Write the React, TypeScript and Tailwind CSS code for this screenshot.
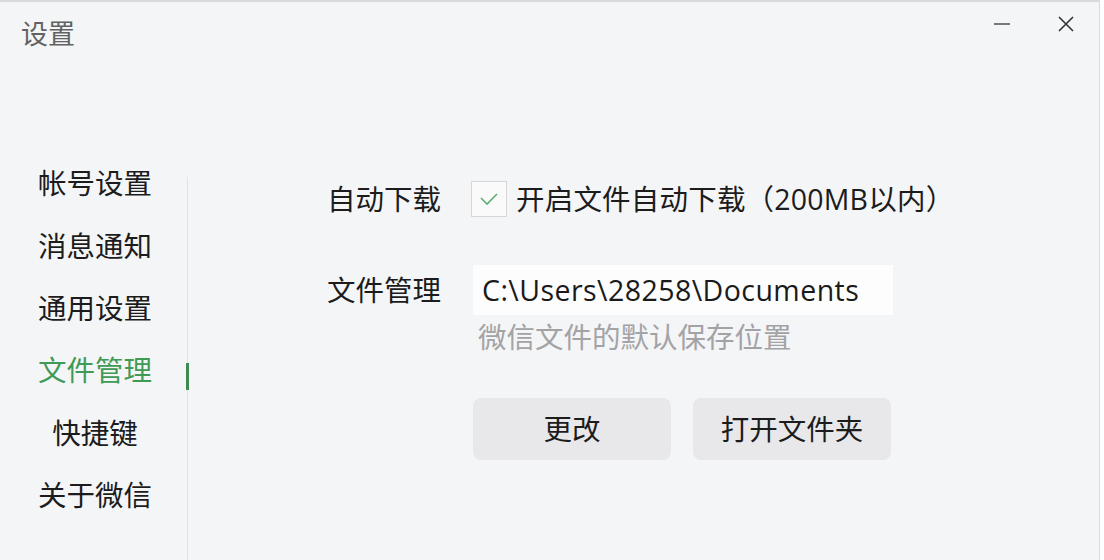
import React from "react";

const FONT = { fontFamily: '"Open Sans", "Noto Sans CJK SC", sans-serif' };

const items = ["帐号设置", "消息通知", "通用设置", "文件管理", "快捷键", "关于微信"];

export default function App() {
  return (
    <div className="w-[1104px] h-[560px] bg-white flex overflow-hidden" style={FONT}>
      <div className="w-[1100px] h-full bg-[#f4f5f7] border-t-2 border-r border-[#d9dadd] flex flex-col">
        {/* title bar */}
        <div className="h-[150px] flex items-start justify-between">
          <div className="pl-[21px] pt-[14px] text-[27px] leading-[36px] text-[#626262]">设置</div>
          <div className="flex items-center pt-[12px] pr-[24px] gap-[46px]">
            <svg width="18" height="18" viewBox="0 0 18 18" className="mt-[1px]">
              <line x1="1" y1="9" x2="17" y2="9" stroke="#444" strokeWidth="1.4" />
            </svg>
            <svg width="18" height="18" viewBox="0 0 18 18">
              <path d="M2 2 L16 16 M16 2 L2 16" stroke="#333" strokeWidth="1.6" fill="none" />
            </svg>
          </div>
        </div>
        {/* body */}
        <div className="flex flex-1">
          <div className="flex">
            <div className="w-[187px] flex flex-col">
              {items.map((t) => (
                <div
                  key={t}
                  className={
                    "h-[62.4px] flex items-center justify-center text-[28.5px] leading-[36px] " +
                    (t === "文件管理" ? "text-[#3f9a55]" : "text-[#1c1c1c]")
                  }
                >
                  <span className="pl-[3px]">{t}</span>
                </div>
              ))}
            </div>
            <div className="relative w-px mt-[25px] bg-[#e2e3e6]">
              <div className="absolute left-[-1px] top-[186px] w-[3px] h-[27px] bg-[#3d8a53]" />
            </div>
          </div>
          {/* content */}
          <div className="flex flex-col pl-[139px] pt-[29px] text-[28.5px] leading-[36px] text-[#1c1c1c]">
            <div className="flex items-center h-[36px]">
              <div className="w-[144px]">自动下载</div>
              <div className="w-[36px] h-[36px] border border-[#d6d7da] bg-[#fafafb] flex items-center justify-center">
                <svg width="20" height="14" viewBox="0 0 20 14">
                  <path d="M2 6 L8 12 L18 2" stroke="#5fae74" strokeWidth="1.6" fill="none" />
                </svg>
              </div>
              <div className="pl-[9px] tracking-[0.2px]">开启文件自动下载（200MB以内）</div>
            </div>
            <div className="flex items-start mt-[48px]">
              <div className="w-[146px] h-[50px] flex items-center">文件管理</div>
              <div className="flex flex-col">
                <div className="w-[420px] h-[50px] bg-[#fdfdfd] flex items-center pl-[9px] text-[#1a1a1a] tracking-[0.45px]">
                  C:\Users\28258\Documents
                </div>
                <div className="pl-[5px] pt-[4px] text-[#a3a3a6]">微信文件的默认保存位置</div>
                <div className="flex gap-[22px] mt-[43px]">
                  <div className="w-[198px] h-[62px] rounded-[8px] bg-[#e8e8ea] flex items-center justify-center">更改</div>
                  <div className="w-[198px] h-[62px] rounded-[8px] bg-[#e8e8ea] flex items-center justify-center">打开文件夹</div>
                </div>
              </div>
            </div>
          </div>
        </div>
      </div>
      <div className="flex-1 bg-white" />
    </div>
  );
}
